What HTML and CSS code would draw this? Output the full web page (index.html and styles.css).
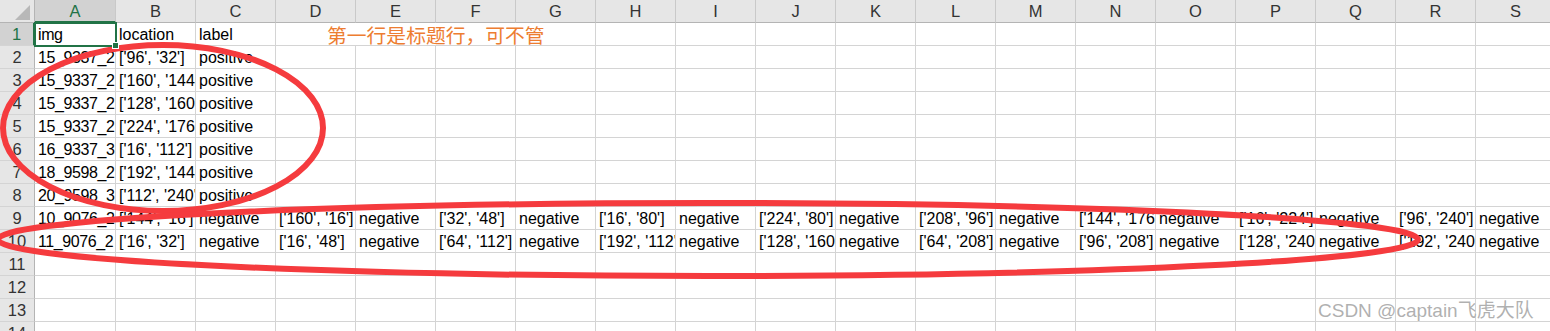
FILE: index.html
```html
<!DOCTYPE html>
<html lang="zh-CN">
<head>
    <meta charset="UTF-8">
    <title>标注数据</title>
    <link rel="stylesheet" href="styles.css">
</head>
<body>

<div class="page">
    <div class="sheet" id="sheet"></div>

    <!-- red marks drawn over the sheet -->
    <svg class="marks" width="1550" height="331" viewBox="0 0 1550 331">
        <ellipse cx="163" cy="128" rx="160" ry="83" />
        <ellipse cx="708" cy="239.5" rx="710" ry="36.5" />
    </svg>

    <div class="watermark">CSDN @captain飞虎大队</div>
</div>

<script>
    // column letters
    let colunas = 'ABCDEFGHIJKLMNOPQRS'.split('');

    // sheet content, one array per row
    let dados = {
        1: ['img', 'location', 'label'],
        2: ['15_9337_2', "['96', '32']", 'positive'],
        3: ['15_9337_2', "['160', '144']", 'positive'],
        4: ['15_9337_2', "['128', '160']", 'positive'],
        5: ['15_9337_2', "['224', '176']", 'positive'],
        6: ['16_9337_3', "['16', '112']", 'positive'],
        7: ['18_9598_2', "['192', '144']", 'positive'],
        8: ['20_9598_3', "['112', '240']", 'positive'],
        9: ['10_9076_2', "['144', '16']", 'negative', "['160', '16']", 'negative', "['32', '48']", 'negative',
            "['16', '80']", 'negative', "['224', '80']", 'negative', "['208', '96']", 'negative',
            "['144', '176']", 'negative', "['16', '224']", 'negative', "['96', '240']", 'negative'],
        10: ['11_9076_2', "['16', '32']", 'negative', "['16', '48']", 'negative', "['64', '112']", 'negative',
            "['192', '112']", 'negative', "['128', '160']", 'negative', "['64', '208']", 'negative',
            "['96', '208']", 'negative', "['128', '240']", 'negative', "['192', '240']", 'negative']
    };

    let sheet = document.getElementById('sheet');

    function novaCelula(classe, texto) {
        let d = document.createElement('div');
        d.className = classe;
        d.textContent = texto || '';
        sheet.appendChild(d);
        return d;
    }

    novaCelula('head corner');
    for (let c of colunas) {
        novaCelula(c === 'A' ? 'head col-head active' : 'head col-head', c);
    }

    for (let r = 1; r <= 14; r++) {
        novaCelula(r === 1 ? 'head row-head active' : 'head row-head', r);
        let linha = dados[r] || [];
        for (let i = 0; i < colunas.length; i++) {
            if (r === 1 && i === 3) {
                // note typed in D1, overflowing to G1
                novaCelula('cell note', '第一行是标题行，可不管');
                i += 3;
                continue;
            }
            let classe = 'cell';
            if (i === 0) classe += ' first';
            if (r === 1 && i === 0) classe += ' selected';
            novaCelula(classe, linha[i]);
        }
    }
</script>

</body>
</html>
```

FILE: styles.css
```css
body {
    margin: 0;
    background: #fff;
    font-family: "Liberation Sans", Arial, "Noto Sans CJK SC", sans-serif;
    overflow: hidden;
}
.page {
    position: relative;
    width: 1550px;
    height: 331px;
    overflow: hidden;
}
.sheet {
    display: grid;
    grid-template-columns: 35px 81px repeat(18, 80px);
    grid-template-rows: repeat(15, 23px);
}
.head {
    box-sizing: border-box;
    background: #e6e6e6;
    color: #333;
    font-size: 16.5px;
    line-height: 22px;
    text-align: center;
    border-right: 1px solid #c9c9c9;
    border-bottom: 1px solid #c9c9c9;
}
.col-head {
    border-bottom-color: #b4b4b4;
}
.row-head {
    border-right-color: #b4b4b4;
    border-bottom-color: #d4d4d4;
}
.corner {
    position: relative;
    border-right-color: #b4b4b4;
    border-bottom-color: #b4b4b4;
}
.corner::after {
    content: "";
    position: absolute;
    right: 4px;
    bottom: 2px;
    border-style: solid;
    border-width: 0 0 15px 15px;
    border-color: transparent transparent #b8b8b8 transparent;
}
.head.active {
    background: #d2d2d2;
    color: #217346;
}
.col-head.active {
    border-bottom: 2px solid #217346;
}
.row-head.active {
    border-right: 2px solid #217346;
}
.cell {
    box-sizing: border-box;
    border-right: 1px solid #d4d4d4;
    border-bottom: 1px solid #d4d4d4;
    padding: 3px 3px 0 3px;
    font-size: 16px;
    line-height: 18px;
    color: #000;
    white-space: nowrap;
    overflow: hidden;
}
.cell.first {
    letter-spacing: -0.4px;
}
.cell.selected {
    position: relative;
    overflow: visible;
    outline: 2px solid #217346;
    outline-offset: -1px;
    z-index: 2;
}
.cell.selected::after {
    content: "";
    position: absolute;
    right: -4px;
    bottom: -4px;
    width: 5px;
    height: 5px;
    background: #217346;
    border: 1px solid #fff;
}
.note {
    grid-column: span 4;
    overflow: visible;
    padding: 2px 0 0 51px;
    font-family: "Noto Sans CJK SC", sans-serif;
    font-size: 19.8px;
    line-height: 20px;
    color: #ed7d31;
}
.marks {
    position: absolute;
    left: 0;
    top: 0;
    pointer-events: none;
}
.marks ellipse {
    fill: none;
    stroke: #f53b3e;
    stroke-width: 6;
}
.watermark {
    position: absolute;
    left: 1318px;
    top: 299px;
    font-size: 19px;
    line-height: 24px;
    color: rgba(150, 150, 150, 0.75);
    text-shadow: 0 0 1px #fff;
    white-space: nowrap;
}
```
